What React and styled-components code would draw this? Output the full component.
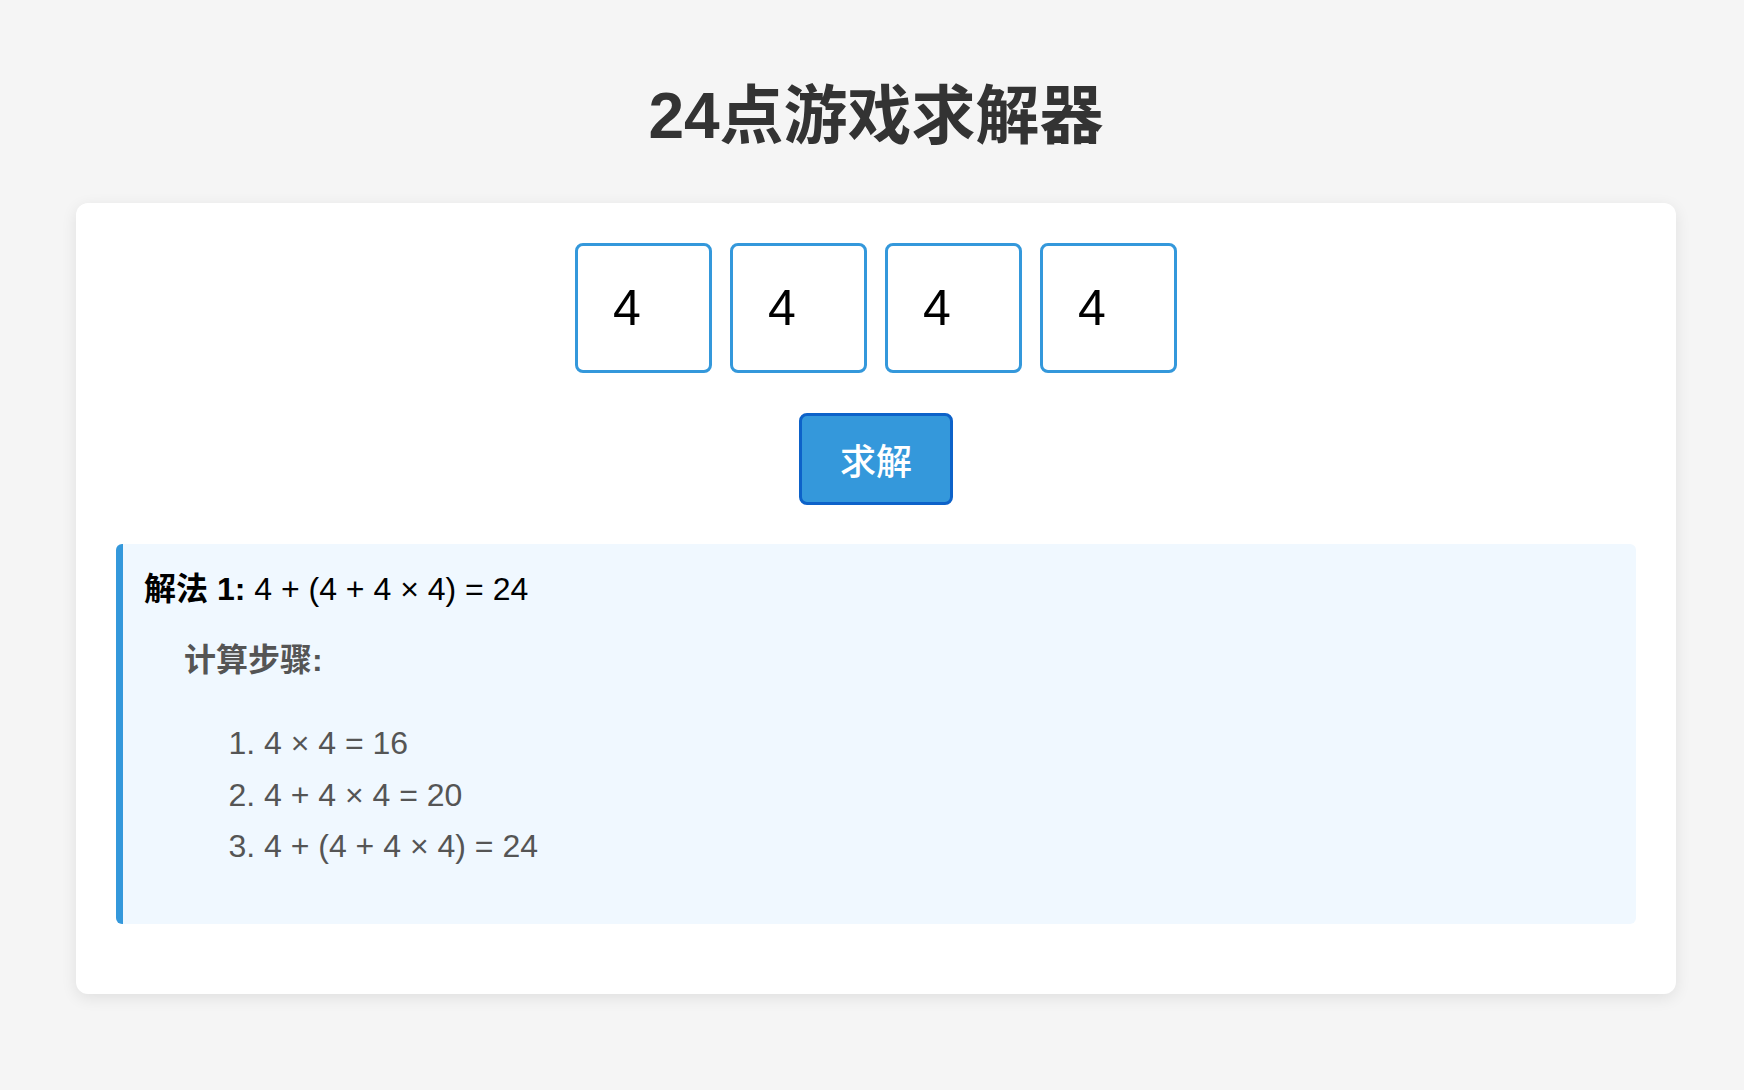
import React, { useState } from 'react';
import styled, { createGlobalStyle } from 'styled-components';

const blue = '#3498db';
const fontStack = `"Liberation Sans", "Noto Sans CJK SC", sans-serif`;

const GlobalStyle = createGlobalStyle`
  html, body {
    margin: 0;
    padding: 0;
    background: #f5f5f5;
    font-family: ${fontStack};
  }
`;

const Page = styled.div`
  padding: 78px 0 80px 8px;
`;

const Title = styled.h1`
  margin: 0 0 49px;
  text-align: center;
  font-size: 64px;
  line-height: 76px;
  font-weight: bold;
  color: #333;
`;

const Card = styled.div`
  max-width: 1600px;
  margin: 0 auto;
  box-sizing: border-box;
  background: white;
  border-radius: 12px;
  box-shadow: 0 4px 16px rgba(0, 0, 0, 0.09);
  padding: 40px 40px 70px;
`;

const InputRow = styled.div`
  display: flex;
  justify-content: center;
  gap: 18px;
`;

const NumberInput = styled.input`
  width: 137px;
  height: 130px;
  box-sizing: border-box;
  border: 3px solid ${blue};
  border-radius: 8px;
  padding: 0 0 0 35px;
  font-family: ${fontStack};
  font-size: 50px;
  color: black;
  background: white;
  outline: none;
`;

const ButtonRow = styled.div`
  display: flex;
  justify-content: center;
  margin: 40px 0 39px;
`;

const SolveButton = styled.button`
  height: 92px;
  padding: 0 38px;
  background: ${blue};
  color: white;
  border: 3.5px solid #0d62c9;
  border-radius: 8px;
  font-family: ${fontStack};
  font-size: 36px;
  font-weight: 500;
  cursor: pointer;
`;

const Solution = styled.div`
  background: #f0f8ff;
  border-left: 7px solid ${blue};
  border-radius: 6px;
  padding: 20px 21px;
  font-size: 32px;
  line-height: 1.6;
  color: #000;
`;

const Steps = styled.div`
  margin: 20px 0 0 40px;
  color: #555;
`;

const StepList = styled.ol`
  margin: 32px 0;
  padding-left: 80px;
`;

const solutions = [
  {
    expr: '4 + (4 + 4 × 4) = 24',
    steps: ['4 × 4 = 16', '4 + 4 × 4 = 20', '4 + (4 + 4 × 4) = 24'],
  },
];

export default function App() {
  const [nums, setNums] = useState(['4', '4', '4', '4']);

  const update = (i, v) => {
    const next = [...nums];
    next[i] = v;
    setNums(next);
  };

  return (
    <Page>
      <GlobalStyle />
      <Title>24点游戏求解器</Title>
      <Card>
        <InputRow>
          {nums.map((n, i) => (
            <NumberInput key={i} value={n} onChange={e => update(i, e.target.value)} />
          ))}
        </InputRow>
        <ButtonRow>
          <SolveButton>求解</SolveButton>
        </ButtonRow>
        {solutions.map((s, i) => (
          <Solution key={i}>
            <div>
              <strong>解法 {i + 1}:</strong> {s.expr}
            </div>
            <Steps>
              <strong>计算步骤:</strong>
              <StepList>
                {s.steps.map((step, j) => (
                  <li key={j}>{step}</li>
                ))}
              </StepList>
            </Steps>
          </Solution>
        ))}
      </Card>
    </Page>
  );
}
